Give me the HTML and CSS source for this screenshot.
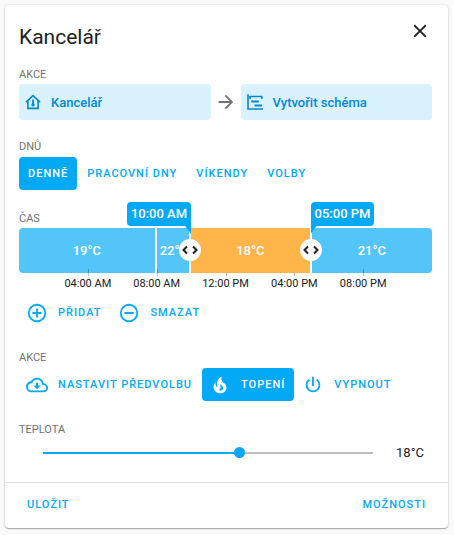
FILE: index.html
```html
<!DOCTYPE html>
<html lang="cs">
<head>
<meta charset="utf-8">
<meta name="viewport" content="width=device-width, initial-scale=1">
<title>Kancelář</title>
<link rel="stylesheet" href="styles.css">
</head>
<body>
<main class="card">
  <div class="content">
    <header class="header">
      <h1 class="title">Kancelář</h1>
      <button class="close" type="button" aria-label="Zavřít">
        <svg class="icon" viewBox="0 0 24 24"><path d="M19,6.41L17.59,5L12,10.59L6.41,5L5,6.41L10.59,12L5,17.59L6.41,19L12,13.41L17.59,19L19,17.59L13.41,12L19,6.41Z"/></svg>
      </button>
    </header>

    <section class="section">
      <h2 class="label">AKCE</h2>
      <div class="chips">
        <button class="chip" type="button">
          <svg class="chip-icon" viewBox="0 0 18 18" fill="none" stroke="currentColor" stroke-width="1.6"><path d="M2 9.2L9 2.6L16 9.2M3.9 8V15.4H14.1V8"/><path d="M9 6.5V12" stroke-width="1.8"/><circle cx="9" cy="11.7" r="1.7" fill="currentColor" stroke="none"/></svg>
          Kancelář
        </button>
        <svg class="icon arrow" viewBox="0 0 24 24"><path d="M4,11V13H16L10.5,18.5L11.92,19.92L19.84,12L11.92,4.08L10.5,5.5L16,11H4Z"/></svg>
        <button class="chip" type="button">
          <svg class="chip-icon" viewBox="0 0 18 18" fill="none" stroke="currentColor" stroke-width="1.6"><path d="M2 1.2V16H17M4 6V3.5H15.8V6"/><path d="M5.2 8.5H12.8M8.6 12.5H16" stroke-width="2"/></svg>
          Vytvořit schéma
        </button>
      </div>
    </section>

    <section class="section">
      <h2 class="label">DNŮ</h2>
      <div class="buttons">
        <button class="btn active" type="button">DENNĚ</button>
        <button class="btn" type="button">PRACOVNÍ DNY</button>
        <button class="btn" type="button">VÍKENDY</button>
        <button class="btn" type="button">VOLBY</button>
      </div>
    </section>

    <section class="section">
      <h2 class="label">ČAS</h2>
      <div class="timeline">
        <div class="slot">19°C</div>
        <div class="slot"><span class="clip">22°C</span></div>
        <div class="slot selected">18°C
          <span class="tip tip-start">10:00 AM</span>
          <button class="handle handle-start" type="button" aria-label="Začátek"><svg viewBox="0 0 22 22"><path d="M8 7.5L4.5 11L8 14.5M14 7.5L17.5 11L14 14.5"/></svg></button>
          <span class="tip tip-end">05:00 PM</span>
          <button class="handle handle-end" type="button" aria-label="Konec"><svg viewBox="0 0 22 22"><path d="M8 7.5L4.5 11L8 14.5M14 7.5L17.5 11L14 14.5"/></svg></button>
        </div>
        <div class="slot">21°C</div>
      </div>
      <ol class="hours">
        <li>04:00 AM</li><li>08:00 AM</li><li>12:00 PM</li><li>04:00 PM</li><li>08:00 PM</li>
      </ol>
      <div class="buttons">
        <button class="btn" type="button"><svg class="icon" viewBox="0 0 24 24"><path d="M12,20C7.59,20 4,16.41 4,12C4,7.59 7.59,4 12,4C16.41,4 20,7.59 20,12C20,16.41 16.41,20 12,20M12,2A10,10 0 0,0 2,12A10,10 0 0,0 12,22A10,10 0 0,0 22,12A10,10 0 0,0 12,2M13,7H11V11H7V13H11V17H13V13H17V11H13V7Z"/></svg>PŘIDAT</button>
        <button class="btn" type="button"><svg class="icon" viewBox="0 0 24 24"><path d="M12,20C7.59,20 4,16.41 4,12C4,7.59 7.59,4 12,4C16.41,4 20,7.59 20,12C20,16.41 16.41,20 12,20M12,2A10,10 0 0,0 2,12A10,10 0 0,0 12,22A10,10 0 0,0 22,12A10,10 0 0,0 12,2M7,13H17V11H7"/></svg>SMAZAT</button>
      </div>
    </section>

    <section class="section">
      <h2 class="label">AKCE</h2>
      <div class="buttons">
        <button class="btn" type="button"><svg class="icon" viewBox="0 0 24 24"><path d="M19.35,10.03C18.67,6.59 15.64,4 12,4C9.11,4 6.6,5.64 5.35,8.03C2.34,8.36 0,10.9 0,14A6,6 0 0,0 6,20H19A5,5 0 0,0 24,15C24,12.36 21.95,10.22 19.35,10.03M19,18H6A4,4 0 0,1 2,14C2,11.95 3.53,10.24 5.56,10.03L6.63,9.92L7.13,8.97C8.08,7.14 9.94,6 12,6C14.62,6 16.88,7.86 17.39,10.43L17.69,11.93L19.22,12.04C20.78,12.14 22,13.45 22,15A3,3 0 0,1 19,18M13.2,9.5H10.8V12.5H8L12,16.5L16,12.5H13.2V9.5Z"/></svg>NASTAVIT PŘEDVOLBU</button>
        <button class="btn active" type="button"><svg class="icon" viewBox="0 0 24 24"><path d="M17.66 11.2C17.43 10.9 17.15 10.64 16.89 10.38C16.22 9.78 15.46 9.35 14.82 8.72C13.33 7.26 13 4.85 13.95 3C13 3.23 12.17 3.75 11.46 4.32C8.87 6.4 7.85 10.07 9.07 13.22C9.11 13.32 9.15 13.42 9.15 13.55C9.15 13.77 9 13.97 8.8 14.05C8.57 14.15 8.33 14.09 8.14 13.93C8.08 13.88 8.04 13.83 8 13.76C6.87 12.33 6.69 10.28 7.45 8.64C5.78 10 4.87 12.3 5 14.47C5.06 14.97 5.12 15.47 5.29 15.97C5.43 16.57 5.7 17.17 6 17.7C7.08 19.43 8.95 20.67 10.96 20.92C13.1 21.19 15.39 20.8 17.03 19.32C18.86 17.66 19.5 15 18.56 12.72L18.43 12.46C18.22 12 17.66 11.2 17.66 11.2M14.5 17.5C14.22 17.74 13.76 18 13.4 18.1C12.28 18.5 11.16 17.94 10.5 17.28C11.69 17 12.4 16.12 12.61 15.23C12.78 14.43 12.46 13.77 12.33 13C12.21 12.26 12.23 11.63 12.5 10.94C12.69 11.32 12.89 11.7 13.13 12C13.9 13 15.11 13.44 15.37 14.8C15.41 14.94 15.43 15.08 15.43 15.23C15.46 16.05 15.1 16.95 14.5 17.5H14.5Z"/></svg>TOPENÍ</button>
        <button class="btn" type="button"><svg class="icon" viewBox="0 0 24 24"><path d="M16.56,5.44L15.11,6.89C16.84,7.94 18,9.83 18,12A6,6 0 0,1 12,18A6,6 0 0,1 6,12C6,9.83 7.16,7.94 8.88,6.88L7.44,5.44C5.36,6.88 4,9.28 4,12A8,8 0 0,0 12,20A8,8 0 0,0 20,12C20,9.28 18.64,6.88 16.56,5.44M13,3H11V13H13"/></svg>VYPNOUT</button>
      </div>
    </section>

    <section class="section">
      <label class="label" for="temperature">TEPLOTA</label>
      <div class="slider-row">
        <input class="slider" id="temperature" type="range" min="12" max="22" value="18">
        <output class="value" for="temperature">18°C</output>
      </div>
    </section>
  </div>
  <footer class="footer">
    <button class="btn" type="button">ULOŽIT</button>
    <button class="btn" type="button">MOŽNOSTI</button>
  </footer>
</main>
</body>
</html>
```
FILE: styles.css
```css
* { box-sizing: border-box; }

body {
  margin: 0;
  padding: 5px 6px 7px 5px;
  background: #fafafa;
  color: #212121;
  font-family: Roboto, "Noto Sans", sans-serif;
}

button {
  border: 0;
  margin: 0;
  background: none;
  font-family: inherit;
  cursor: pointer;
}

.card {
  background: #fff;
  border-radius: 4px;
  box-shadow: 0 1px 1px rgba(0, 0, 0, 0.3), 0 0 3px rgba(0, 0, 0, 0.16);
}

.content { padding: 14px 16px 15px 14px; }

.header {
  display: flex;
  align-items: flex-start;
  justify-content: space-between;
  height: 48px;
}

.title {
  margin: 0;
  font-size: 21px;
  line-height: 36px;
  font-weight: 400;
}

.close {
  display: flex;
  padding: 1px;
  color: #212121;
}

.icon {
  width: 22px;
  height: 22px;
  flex: none;
  fill: currentColor;
}

.section + .section { margin-top: 19px; }

.label {
  display: block;
  margin: 0;
  padding-bottom: 1px;
  font-size: 11px;
  line-height: 16px;
  font-weight: 400;
  color: #727272;
}

.chips {
  display: flex;
  align-items: center;
  gap: 4px;
}

.chip {
  flex: 1 1 0;
  display: flex;
  align-items: center;
  gap: 9px;
  height: 36px;
  padding: 0 5px;
  border-radius: 4px;
  background: #d9f2fd;
  color: #0288d1;
  font-size: 13px;
  font-weight: 500;
}

.chip-icon {
  width: 18px;
  height: 18px;
}

.arrow { color: #727272; }

.buttons {
  display: flex;
  gap: 1px;
  padding: 1px 0 2px;
}

.btn {
  display: flex;
  align-items: center;
  gap: 10px;
  height: 33px;
  padding: 0 9px;
  border-radius: 4px;
  color: #03a9f4;
  font-size: 11px;
  font-weight: 500;
  letter-spacing: 1px;
  white-space: nowrap;
}

.btn .icon { margin-left: -2px; }

.btn.active {
  background: #03a9f4;
  color: #fff;
}

.timeline {
  display: grid;
  grid-template-columns: 8fr 2fr 7fr 7fr;
  height: 45px;
}

.slot {
  position: relative;
  min-width: 0;
  display: flex;
  align-items: center;
  justify-content: center;
  border-right: 2px solid #fff;
  background: #54c5f8;
  color: #fff;
  font-size: 13px;
  font-weight: 500;
}

.slot:first-child { border-radius: 4px 0 0 4px; }
.slot:last-child { border-right: 0; border-radius: 0 4px 4px 0; }
.slot.selected { background: #ffb54a; z-index: 1; }

.clip {
  width: 100%;
  padding-left: 3px;
  overflow: hidden;
}

.tip {
  position: absolute;
  top: -26px;
  height: 24px;
  padding: 0 4px;
  border-radius: 4px;
  background: #03a9f4;
  line-height: 23px;
  white-space: nowrap;
}

.tip::after {
  content: "";
  position: absolute;
  top: 100%;
  width: 6px;
  height: 8px;
  background: #03a9f4;
}

.tip-start { right: 100%; border-bottom-right-radius: 0; }
.tip-start::after { right: 0; clip-path: polygon(0 0, 100% 0, 100% 100%); }
.tip-end { left: calc(100% + 1px); border-bottom-left-radius: 0; }
.tip-end::after { left: 0; clip-path: polygon(0 0, 100% 0, 0 100%); }

.handle {
  position: absolute;
  top: 11px;
  width: 22px;
  height: 22px;
  padding: 0;
  border-radius: 50%;
  background: #fff;
}

.handle svg {
  display: block;
  fill: none;
  stroke: #212121;
  stroke-width: 2;
}

.handle-start { left: -12px; }
.handle-end { right: -12px; }

.hours {
  display: flex;
  margin: 0;
  padding: 3px calc(100% / 12);
  list-style: none;
  font-size: 11px;
  line-height: 16px;
}

.hours li {
  position: relative;
  flex: 1 1 0;
  text-align: center;
  white-space: nowrap;
}

.hours li::before {
  content: "";
  position: absolute;
  top: -7px;
  left: 50%;
  width: 1px;
  height: 7px;
  background: rgba(0, 0, 0, 0.25);
}

.slider-row {
  display: flex;
  align-items: center;
  padding: 0 8px 0 24px;
}

.slider {
  flex: 1;
  min-width: 0;
  height: 28px;
  margin: 0 23px 0 0;
  appearance: none;
  background: none;
}

.slider::-webkit-slider-runnable-track {
  height: 2px;
  background: linear-gradient(to right, #03a9f4 60%, #bdbdbd 60%);
}

.slider::-webkit-slider-thumb {
  appearance: none;
  width: 11px;
  height: 11px;
  margin-top: -5px;
  border-radius: 50%;
  background: #03a9f4;
}

.value {
  font-size: 13px;
  line-height: 16px;
}

.footer {
  display: flex;
  justify-content: space-between;
  border-top: 1px solid #e0e0e0;
  padding: 5px 13px 7px;
}
```
